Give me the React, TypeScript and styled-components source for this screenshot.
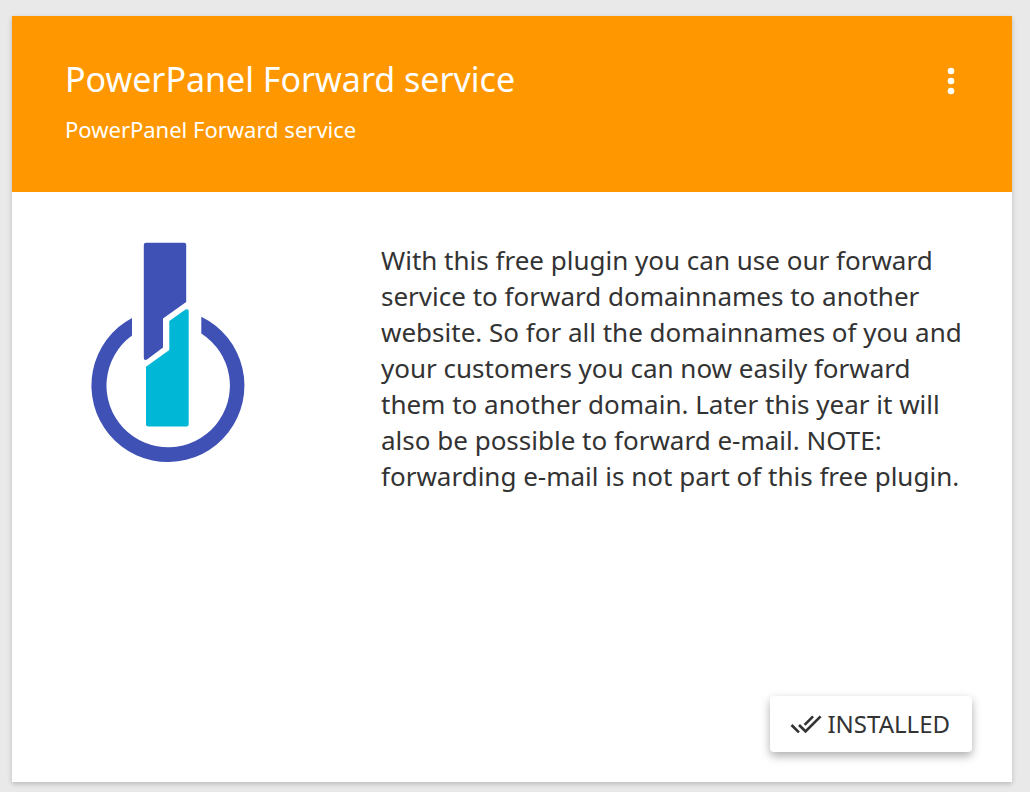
import React from "react";
import styled, { createGlobalStyle } from "styled-components";

const GlobalStyle = createGlobalStyle`
  *, *::before, *::after { box-sizing: border-box; }
  body {
    margin: 0;
    background: #e9e9e9;
    color: #333;
    font-family: "Noto Sans", sans-serif;
  }
`;

const Page = styled.main`
  display: flex;
  min-height: 100vh;
  padding: 16px 18px 10px 12px;
`;

const Card = styled.article`
  display: flex;
  flex: 1;
  flex-direction: column;
  background: #fff;
  box-shadow: 0 2px 5px rgba(0, 0, 0, 0.2);
`;

const Header = styled.header`
  display: flex;
  align-items: flex-start;
  justify-content: space-between;
  min-height: 176px;
  padding: 39px 41px 39px 53px;
  background: #ff9800;
  color: #fff;
`;

const Title = styled.h1`
  margin: 0;
  font-size: 34px;
  font-weight: 400;
  line-height: 48px;
`;

const Subtitle = styled.p`
  margin: 10px 0 0;
  font-size: 22px;
  line-height: 32px;
`;

const MenuButton = styled.button`
  display: flex;
  margin-top: 6px;
  padding: 0;
  border: 0;
  background: none;
  color: inherit;
  cursor: pointer;
`;

const Content = styled.div`
  display: flex;
  flex: 1;
  padding: 50px 41px 30px 78px;
`;

const LogoColumn = styled.div`
  flex: 0 0 291px;
`;

const Description = styled.p`
  flex: 1;
  margin: 0;
  font-size: 26px;
  line-height: 36px;
`;

const Footer = styled.footer`
  display: flex;
  justify-content: flex-end;
  padding: 0 40px 30px;
`;

const InstalledButton = styled.button`
  display: flex;
  align-items: center;
  gap: 5px;
  height: 56px;
  padding: 0 22px 0 20px;
  border: 0;
  border-radius: 4px;
  background: #fff;
  box-shadow: 0 4px 10px rgba(0, 0, 0, 0.32);
  color: #333;
  font-family: inherit;
  font-size: 24px;
  line-height: 36px;
  cursor: pointer;
`;

function PluginLogo() {
  return (
    <svg width="156" height="222" viewBox="90 242 156 222" role="img" aria-label="PowerPanel">
      <path
        fill="#3f51b5"
        d="M132 318A76.5 76.5 0 1 0 201.3 316.7V333.5A61.7 61.7 0 1 1 132 335.6Z"
      />
      <path
        fill="#3f51b5"
        d="M146 242.8H184.2Q186.2 242.8 186.2 244.8V302L163 318.5V347.5L147 359.6Q143.8 361 143.8 357.5V245Q143.8 242.8 146 242.8Z"
      />
      <path
        fill="#00b8d6"
        d="M169.3 321L185.5 309.6Q188.7 308.2 188.7 311.5V424Q188.7 426.5 186.2 426.5H148.5Q146 426.5 146 424V366.8L169.3 350Z"
      />
    </svg>
  );
}

function MoreIcon() {
  return (
    <svg width="40" height="40" viewBox="0 0 24 24" fill="currentColor" aria-hidden="true">
      <circle cx="12" cy="6" r="2" />
      <circle cx="12" cy="12" r="2" />
      <circle cx="12" cy="18" r="2" />
    </svg>
  );
}

function DoneAllIcon() {
  return (
    <svg width="32" height="32" viewBox="0 0 24 24" fill="currentColor" aria-hidden="true">
      <path d="M18 7l-1.41-1.41-6.34 6.34 1.41 1.41L18 7zm4.24-1.41L11.66 16.17 7.48 12l-1.41 1.41L11.66 19l12-12-1.42-1.41zM.41 13.41L6 19l1.41-1.41L1.83 12 .41 13.41z" />
    </svg>
  );
}

export default function App() {
  return (
    <>
      <GlobalStyle />
      <Page>
        <Card>
          <Header>
            <div>
              <Title>PowerPanel Forward service</Title>
              <Subtitle>PowerPanel Forward service</Subtitle>
            </div>
            <MenuButton type="button" aria-label="More options">
              <MoreIcon />
            </MenuButton>
          </Header>
          <Content>
            <LogoColumn>
              <PluginLogo />
            </LogoColumn>
            <Description>
              With this free plugin you can use our forward service to forward
              domainnames to another website. So for all the domainnames of you
              and your customers you can now easily forward them to another
              domain. Later this year it will also be possible to forward
              e-mail. NOTE: forwarding e-mail is not part of this free plugin.
            </Description>
          </Content>
          <Footer>
            <InstalledButton type="button">
              <DoneAllIcon />
              INSTALLED
            </InstalledButton>
          </Footer>
        </Card>
      </Page>
    </>
  );
}
